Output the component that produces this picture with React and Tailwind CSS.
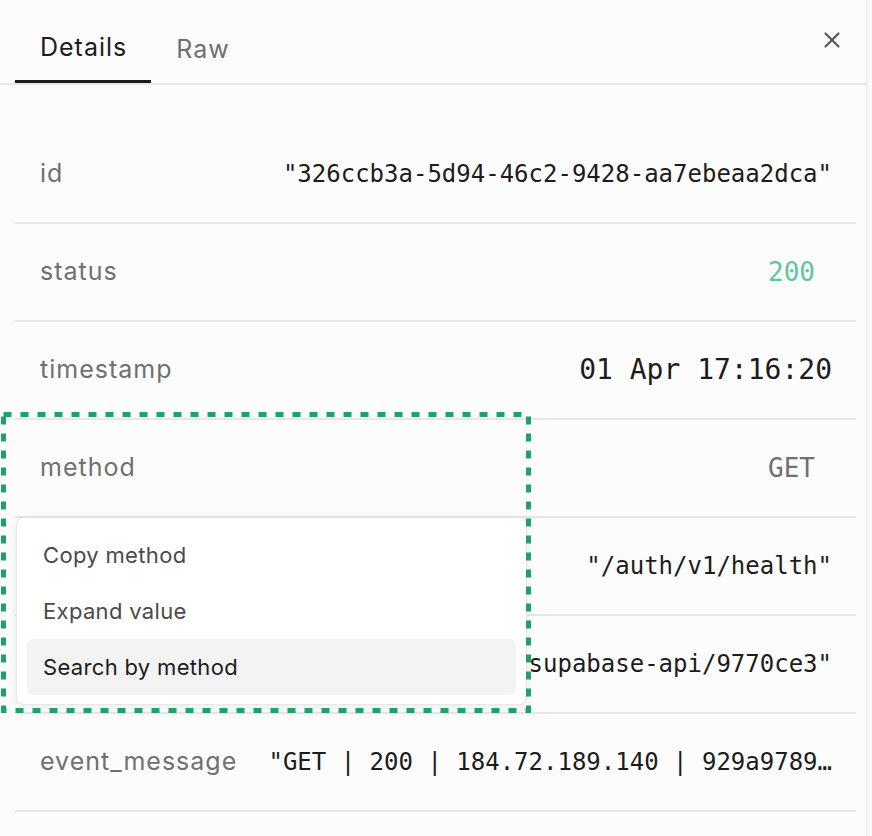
import { X } from 'lucide-react';

const rows = [
  { label: 'id', value: '"326ccb3a-5d94-46c2-9428-aa7ebeaa2dca"' },
  { label: 'status', value: '200', kind: 'status' },
  { label: 'timestamp', value: '01 Apr 17:16:20', kind: 'time' },
  { label: 'method', value: 'GET', kind: 'method' },
  { label: 'path', value: '"/auth/v1/health"' },
  { label: 'user_agent', value: '"supabase-api/9770ce3"' },
  { label: 'event_message', value: '"GET | 200 | 184.72.189.140 | 929a9789…' },
];

function Value({ row }) {
  if (row.kind === 'status') {
    return <span className="pr-[17px] font-['DejaVu_Sans_Mono',monospace] text-[26px] text-[#5ec79c]">{row.value}</span>;
  }
  if (row.kind === 'method') {
    return <span className="pr-[17px] font-['DejaVu_Sans_Mono',monospace] text-[26px] text-[#707070]">{row.value}</span>;
  }
  if (row.kind === 'time') {
    return <span className="font-['DejaVu_Sans_Mono',monospace] text-[28px] text-[#1c1c1c]">{row.value}</span>;
  }
  return <span className="truncate font-['DejaVu_Sans_Mono',monospace] text-[24px] text-[#1c1c1c]">{row.value}</span>;
}

export default function App() {
  return (
    <div className="relative h-[836px] w-[872px] overflow-hidden bg-[#fcfcfc] font-['Inter',sans-serif]">
      <div className="h-full w-[868px] border-r-2 border-[#f0f0f0]">
        {/* header */}
        <div className="flex h-[85px] items-end justify-between border-b-2 border-[#e6e6e6] pl-[15px] pr-[21px]">
          <div className="flex">
            <button className="h-[67px] border-b-[3px] border-[#1c1c1c] pl-[25px] pr-[24px] text-[25px] tracking-[0.04em] text-[#1c1c1c]">Details</button>
            <button className="h-[67px] px-[25px] text-[25px] tracking-[0.04em] text-[#707070]">Raw</button>
          </div>
          <button className="mb-[30px] text-[#555]">
            <X size={26} strokeWidth={2} />
          </button>
        </div>

        {/* rows */}
        <div className="mx-[15px] mt-[41px] w-[841px]">
          {rows.map((row) => (
            <div key={row.label} className="flex h-[98px] items-center justify-between gap-6 border-b-2 border-[#e6e6e6] pl-[25px] pr-[24px]">
              <span className="shrink-0 text-[25px] tracking-[0.04em] text-[#707070]">{row.label}</span>
              <Value row={row} />
            </div>
          ))}
        </div>
      </div>

      {/* context menu */}
      <div className="absolute left-[16px] top-[517px] w-[511px] rounded-lg border border-[#e8e8e8] bg-white px-[10px] py-[9px] shadow-[0_2px_8px_rgba(0,0,0,0.08)]">
        <div className="flex h-[56px] items-center rounded-md px-[16px] text-[22px] tracking-[0.015em] text-[#4a4a4a]">Copy method</div>
        <div className="flex h-[56px] items-center rounded-md px-[16px] text-[22px] tracking-[0.015em] text-[#4a4a4a]">Expand value</div>
        <div className="flex h-[56px] items-center rounded-md bg-[#f3f3f3] px-[16px] text-[22px] tracking-[0.015em] text-[#1c1c1c]">Search by method</div>
      </div>

      {/* highlight annotation */}
      <svg className="pointer-events-none absolute left-0 top-0" width="872" height="836">
        <rect x="3.5" y="414.5" width="525" height="296" fill="none" stroke="#22a06a" strokeWidth="5" strokeDasharray="8 9" />
      </svg>
    </div>
  );
}
